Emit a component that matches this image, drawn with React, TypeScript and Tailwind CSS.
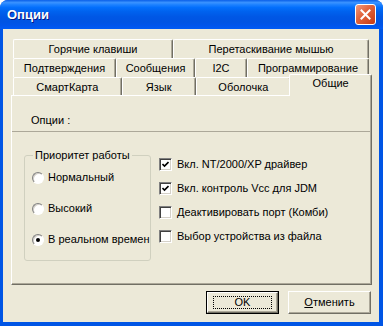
import React from "react";

const font = "font-['Liberation_Sans','Arial',sans-serif]";

function Tab(props: { label: string; className: string; selected?: boolean }) {
  const { label, className, selected } = props;
  if (selected) {
    return (
      <div
        className={`${className} relative z-10 -mb-[1px] -ml-[2px] h-[22px] rounded-t-[2px] border-l border-t border-r border-l-white border-t-white border-r-[#716F64] bg-[#ECE9D8] pt-[2px] text-center leading-[13px] shadow-[inset_-1px_0_0_#ACA899]`}
      >
        {label}
      </div>
    );
  }
  return (
    <div
      className={`${className} h-full rounded-t-[2px] border-l border-t border-r border-l-white border-t-white border-r-[#716F64] pt-[3px] text-center leading-[13px] whitespace-nowrap shadow-[inset_-1px_0_0_#ACA899]`}
    >
      {label}
    </div>
  );
}

function Radio(props: { label: string; checked?: boolean }) {
  return (
    <div className="flex h-[13px] w-[118px] items-center gap-[4px] whitespace-nowrap leading-[13px]">
      <span className="flex h-[12px] w-[12px] shrink-0 items-center justify-center rounded-full border border-t-[#808080] border-l-[#808080] border-b-white border-r-white bg-white shadow-[inset_1px_1px_0_#D4D0C8]">
        {props.checked && <span className="h-[4px] w-[4px] rounded-full bg-black" />}
      </span>
      <span>{props.label}</span>
    </div>
  );
}

function Check(props: { label: string; checked?: boolean }) {
  return (
    <div className="flex h-[13px] items-center gap-[5px] whitespace-nowrap leading-[13px]">
      <span className="flex h-[13px] w-[13px] shrink-0 items-center justify-center border border-t-[#808080] border-l-[#808080] border-b-white border-r-white bg-white shadow-[inset_1px_1px_0_#404040,inset_-1px_-1px_0_#D4D0C8]">
        {props.checked && (
          <svg width="7" height="7" viewBox="0 0 7 7">
            <path d="M0.5 3 L2.5 5 L6.5 1" fill="none" stroke="black" strokeWidth="1.6" />
          </svg>
        )}
      </span>
      <span>{props.label}</span>
    </div>
  );
}

export default function App() {
  return (
    <div className={`flex h-[326px] w-[383px] flex-col overflow-hidden rounded-t-[8px] bg-[#0055E5] text-[11px] text-black ${font}`}>
      {/* title bar */}
      <div className="flex h-[29px] shrink-0 items-center justify-between bg-[linear-gradient(180deg,#0A5FE8_0%,#3A93FF_9%,#1E82FF_16%,#036FFC_26%,#0062EE_40%,#0057E5_58%,#0054E3_76%,#0055EB_88%,#005BF5_100%)] pl-[7px] pr-[7px]">
        <span className="text-[13px] font-bold text-white [text-shadow:1px_1px_0_#0A1883]">Опции</span>
        <div className="flex h-[21px] w-[21px] items-center justify-center rounded-[3px] border border-white bg-[linear-gradient(135deg,#F09A7E_0%,#E2663F_40%,#C83A12_100%)]">
          <svg width="11" height="11" viewBox="0 0 11 11">
            <path d="M1.5 1.5 L9.5 9.5 M9.5 1.5 L1.5 9.5" stroke="white" strokeWidth="2" strokeLinecap="square" />
          </svg>
        </div>
      </div>

      {/* body */}
      <div className="ml-[3px] mr-[4px] mb-[4px] flex flex-1 flex-col bg-[#ECE9D8] pl-[8px] pr-[7px] pt-[10px]">
        <div className="ml-[2px] flex flex-col">
          <div className="flex h-[19px]">
            <Tab label="Горячие клавиши" className="w-[160px]" />
            <Tab label="Перетаскивание мышью" className="w-[196px]" />
          </div>
          <div className="flex h-[19px]">
            <Tab label="Подтверждения" className="w-[103px]" />
            <Tab label="Сообщения" className="w-[79px]" />
            <Tab label="I2C" className="w-[52px]" />
            <Tab label="Программирование" className="w-[122px]" />
          </div>
          <div className="flex h-[18px] items-end">
            <Tab label="СмартКарта" className="w-[109px]" />
            <Tab label="Язык" className="w-[74px]" />
            <Tab label="Оболочка" className="w-[96px]" />
            <Tab label="Общие" className="w-[83px]" selected />
          </div>
        </div>

        {/* panel */}
        <div className="flex h-[190px] w-[361px] flex-col border border-l-white border-t-white border-r-[#716F64] border-b-[#716F64] pt-[18px] shadow-[inset_-1px_-1px_0_#ACA899]">
          <div className="pl-[19px] leading-[13px]">Опции :</div>
          <div className="mt-[4px] mr-[1px] h-px bg-[#ACA899]" />
          <div className="flex pl-[12px]">
            <fieldset className="mt-[17px] h-[112px] w-[127px] rounded-[3px] border border-[#D0D0BF] pl-[7px]">
              <legend className="ml-[1px] px-[2px] leading-[13px]">Приоритет работы</legend>
              <div className="mt-[9px] flex flex-col gap-[18px]">
                <Radio label="Нормальный" />
                <Radio label="Высокий" />
                <Radio label="В реальном времен" checked />
              </div>
            </fieldset>
            <div className="ml-[8px] mt-[26px] flex flex-col gap-[11px]">
              <Check label="Вкл. NT/2000/XP драйвер" checked />
              <Check label="Вкл. контроль Vcc для JDM" checked />
              <Check label="Деактивировать порт (Комби)" />
              <Check label="Выбор устройства из файла" />
            </div>
          </div>
        </div>

        {/* buttons */}
        <div className="mt-[6px] flex gap-[9px] pl-[195px]">
          <div className="h-[23px] w-[73px] border border-black">
            <div className="flex h-full w-full items-center justify-center border border-t-white border-l-white border-r-[#716F64] border-b-[#716F64] shadow-[inset_-1px_-1px_0_#ACA899]">
              <div className="flex h-[13px] w-[59px] items-center justify-center border border-dotted border-black leading-[13px]">
                OK
              </div>
            </div>
          </div>
          <div className="flex h-[23px] w-[83px] items-center justify-center border border-t-white border-l-white border-r-[#716F64] border-b-[#716F64] leading-[13px] shadow-[inset_-1px_-1px_0_#ACA899]">
            <span>
              <span className="underline">О</span>тменить
            </span>
          </div>
        </div>
      </div>
    </div>
  );
}
